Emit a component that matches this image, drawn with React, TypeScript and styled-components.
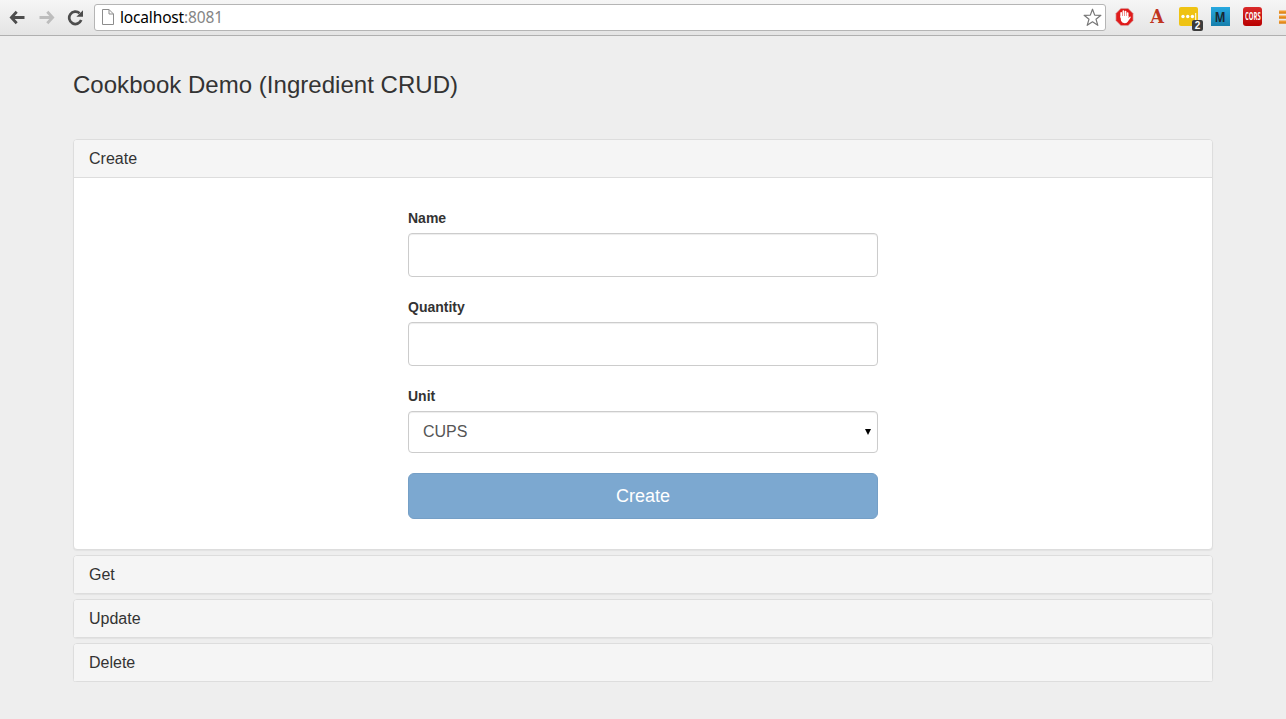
import React, { useState } from "react";
import styled, { createGlobalStyle } from "styled-components";

const GlobalStyle = createGlobalStyle`
  * { box-sizing: border-box; }
  body {
    margin: 0;
    background: #eee;
    color: #333;
    font: 14px/20px "Liberation Sans", Arial, sans-serif;
    overflow: hidden;
  }
`;

const Toolbar = styled.header`
  display: flex;
  align-items: center;
  height: 36px;
  padding: 0 0 1px 9px;
  overflow: hidden;
  background: linear-gradient(#f6f6f6, #e4e4e4);
  border-bottom: 1px solid #b0b0b0;
`;

const NavButtons = styled.nav`
  display: flex;
  gap: 12px;
  width: 85px;
  flex: none;
  svg { display: block; flex: none; }
`;

const AddressBar = styled.div`
  display: flex;
  align-items: center;
  flex: none;
  width: 1012px;
  height: 27px;
  padding: 0 3px 0 7px;
  background: #fff;
  border: 1px solid #b5b5b5;
  border-radius: 3px;
`;

const Url = styled.span`
  flex: 1;
  margin-left: 6px;
  font: 15.5px/24px "Noto Sans", sans-serif;
  letter-spacing: -0.16px;
  color: #000;
`;

const Port = styled.span`
  color: #858585;
`;

const Extensions = styled.div`
  display: flex;
  flex: none;
  gap: 12px;
  margin-left: 9px;
`;

const Extension = styled.div`
  position: relative;
  display: flex;
  width: 20px;
  height: 20px;
  flex: none;
  svg { display: block; }
`;

const MenuButton = styled(Extension)`
  margin-left: 4px;
`;

const Tile = styled.div<{ $background: string; $color?: string; $radius?: number; $font: string }>`
  display: flex;
  align-items: center;
  justify-content: center;
  width: 19px;
  height: 19px;
  background: ${(p) => p.$background};
  color: ${(p) => p.$color ?? "#fff"};
  border-radius: ${(p) => p.$radius ?? 0}px;
  font: ${(p) => p.$font};
`;

const Condensed = styled.span<{ $scale: number }>`
  transform: scaleX(${(p) => p.$scale});
`;

const Badge = styled.span`
  position: absolute;
  left: 13px;
  top: 13px;
  width: 11px;
  height: 11px;
  border-radius: 2px;
  background: #3c3c3c;
  color: #fff;
  font: bold 10px/11px "Liberation Sans", Arial, sans-serif;
  text-align: center;
`;

const Page = styled.main`
  width: 1140px;
  margin: 0 auto;
  padding-top: 35px;
`;

const Title = styled.h1`
  margin: 0 0 41px;
  font-size: 24px;
  line-height: 27px;
  font-weight: 400;
  letter-spacing: 0.03px;
`;

const Accordion = styled.div`
  display: flex;
  flex-direction: column;
  gap: 5px;
`;

const Panel = styled.section`
  background: #fff;
  border: 1px solid #ddd;
  border-radius: 4px;
  box-shadow: 0 1px 1px rgba(0, 0, 0, 0.05);
`;

const PanelHeading = styled.h2`
  height: 37px;
  margin: 0;
  padding: 10px 15px;
  background: #f5f5f5;
  border-radius: 3px 3px 0 0;
  font-size: 16px;
  line-height: 17px;
  font-weight: 400;
  cursor: pointer;
`;

const PanelBody = styled.div`
  padding: 30px 334px;
  border-top: 1px solid #ddd;
`;

const Form = styled.form`
  display: flex;
  flex-direction: column;
  gap: 20px;
`;

const Field = styled.label`
  display: flex;
  flex-direction: column;
  gap: 5px;
  font-weight: 700;
`;

const Input = styled.input`
  height: 44px;
  padding: 10px 14px;
  border: 1px solid #ccc;
  border-radius: 4px;
  background: #fff;
  box-shadow: inset 0 1px 1px rgba(0, 0, 0, 0.075);
  color: #555;
  font: 16px "Liberation Sans", Arial, sans-serif;
`;

const Select = styled.div`
  display: flex;
  align-items: center;
  justify-content: space-between;
  height: 42px;
  padding: 0 6px 1px 14px;
  border: 1px solid #ccc;
  border-radius: 4px;
  background: #fff;
  box-shadow: inset 0 1px 1px rgba(0, 0, 0, 0.075);
  color: #555;
  font-size: 16px;
  font-weight: 400;
`;

const SubmitButton = styled.button`
  height: 46px;
  padding: 0;
  border: 1px solid #759fc6;
  border-radius: 6px;
  background: #7ca8d0;
  color: #fff;
  font: 18px/24px "Liberation Sans", Arial, sans-serif;
`;

const BackIcon = () => (
  <svg width="17" height="17" viewBox="0 0 17 17" fill="none" stroke="#4d4d4d" strokeWidth="2.8">
    <path d="M7.7 2.8 2.4 8.5 7.7 14.2M2.5 8.5H15.5" />
  </svg>
);

const ForwardIcon = () => (
  <svg width="17" height="17" viewBox="0 0 17 17" fill="none" stroke="#bdbdbd" strokeWidth="2.8">
    <path d="M9.3 2.8 14.6 8.5 9.3 14.2M14.5 8.5H1.5" />
  </svg>
);

const ReloadIcon = () => (
  <svg width="17" height="17" viewBox="0 0 17 17">
    <path d="M14.2 11.1A6.2 6.2 0 1 1 12.6 4.2" fill="none" stroke="#4d4d4d" strokeWidth="2.7" />
    <path d="M16 1.2V7.7H9.4Z" fill="#4d4d4d" />
  </svg>
);

const PageIcon = () => (
  <svg width="12" height="16" viewBox="0 0 12 16" fill="#fff" stroke="#8c8c8c">
    <path d="M.5 .5H7L11.5 5V15.5H.5ZM7 .5V5H11.5" />
  </svg>
);

const StarIcon = () => (
  <svg width="19" height="19" viewBox="0 0 19 19" fill="#fff" stroke="#777" strokeWidth="1.2" strokeLinejoin="round">
    <path d="m9.5 1.2 2.2 5.9 6.2.2-4.9 3.9 1.8 6.1-5.3-3.5-5.3 3.5L6 11.2 1.1 7.3l6.2-.2Z" />
  </svg>
);

const StopHandIcon = () => (
  <svg width="19" height="20" viewBox="0 0 20 20">
    <path d="M6.2 1H13.8L19 6.2V13.8L13.8 19H6.2L1 13.8V6.2Z" fill="#e01b1b" stroke="#d5a5a5" strokeWidth=".7" />
    <path
      d="M6.5 10V5.6M8.8 9V3.9M11.1 9V4.3M13.3 10V5.8"
      stroke="#fff"
      strokeWidth="1.8"
      strokeLinecap="round"
    />
    <path d="M5.7 9H14.1V11.2L16 9.3 16.6 10.4 13.2 15.2Q12.3 16.6 10 16.6 7.3 16.6 6.3 14Z" fill="#fff" />
  </svg>
);

const DotsIcon = () => (
  <svg width="19" height="19" viewBox="0 0 19 19">
    <rect width="19" height="19" rx="2" fill="#efc313" />
    <g fill="#fff">
      <circle cx="4" cy="9.5" r="1.7" />
      <circle cx="8.7" cy="9.5" r="1.7" />
      <circle cx="13.4" cy="9.5" r="1.7" />
      <rect x="16.2" y="6" width="1" height="7" />
    </g>
  </svg>
);

const MenuIcon = () => (
  <svg width="16" height="20" viewBox="0 0 16 20">
    <path d="M0 5H16M0 10H16M0 15H16" stroke="#f29a2e" strokeWidth="3" />
    <path d="M0 6H16M0 11H16M0 16H16" stroke="#cf780f" strokeWidth="1" />
  </svg>
);

const CaretIcon = () => (
  <svg width="6" height="6" viewBox="0 0 6 6">
    <path d="M0 0H6L3 6Z" fill="#000" />
  </svg>
);

const sections = ["Create", "Get", "Update", "Delete"];

function IngredientForm() {
  return (
    <Form onSubmit={(event) => event.preventDefault()}>
      <Field>
        Name
        <Input />
      </Field>
      <Field>
        Quantity
        <Input />
      </Field>
      <Field as="div">
        Unit
        <Select role="combobox" aria-label="Unit">
          CUPS
          <CaretIcon />
        </Select>
      </Field>
      <SubmitButton disabled>Create</SubmitButton>
    </Form>
  );
}

export default function App() {
  const [open, setOpen] = useState("Create");

  return (
    <>
      <GlobalStyle />
      <Toolbar>
        <NavButtons>
          <BackIcon />
          <ForwardIcon />
          <ReloadIcon />
        </NavButtons>
        <AddressBar>
          <PageIcon />
          <Url>
            localhost<Port>:8081</Port>
          </Url>
          <StarIcon />
        </AddressBar>
        <Extensions>
          <Extension>
            <StopHandIcon />
          </Extension>
          <Extension>
            <Tile $background="none" $color="#c0341f" $font='bold 18px/19px "DejaVu Serif", serif'>
              <Condensed $scale={0.98}>A</Condensed>
            </Tile>
          </Extension>
          <Extension>
            <DotsIcon />
            <Badge>2</Badge>
          </Extension>
          <Extension>
            <Tile
              $background="linear-gradient(#27a9e0, #167fac)"
              $color="#182a35"
              $font='bold 15px/19px "Open Sans", sans-serif'
            >
              <Condensed $scale={0.76}>M</Condensed>
            </Tile>
          </Extension>
          <Extension>
            <Tile
              $background="linear-gradient(#d92a2a, #b90000)"
              $radius={3}
              $font='bold 10.5px/19px "Open Sans", sans-serif'
            >
              <Condensed $scale={0.56}>CORS</Condensed>
            </Tile>
          </Extension>
          <MenuButton>
            <MenuIcon />
          </MenuButton>
        </Extensions>
      </Toolbar>
      <Page>
        <Title>Cookbook Demo (Ingredient CRUD)</Title>
        <Accordion>
          {sections.map((name) => (
            <Panel key={name}>
              <PanelHeading onClick={() => setOpen(name)}>{name}</PanelHeading>
              {open === name && (
                <PanelBody>
                  <IngredientForm />
                </PanelBody>
              )}
            </Panel>
          ))}
        </Accordion>
      </Page>
    </>
  );
}
